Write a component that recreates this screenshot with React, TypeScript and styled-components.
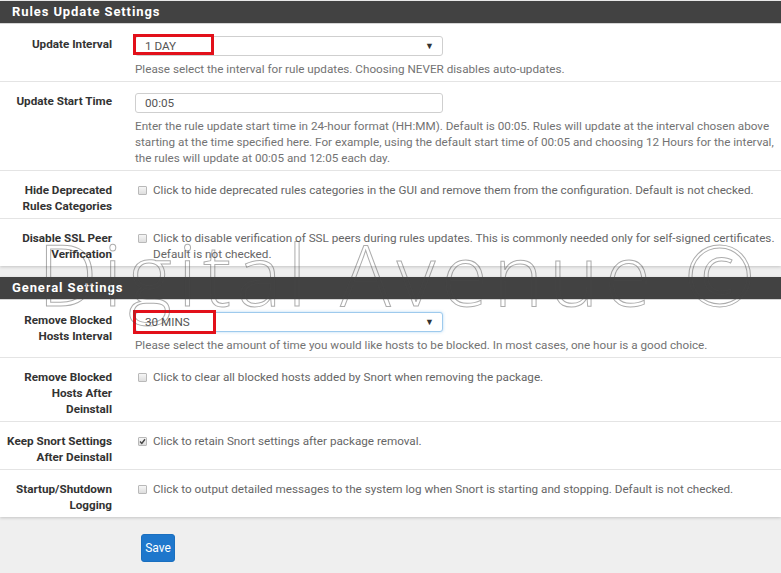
import React from "react";
import styled, { createGlobalStyle } from "styled-components";

const Global = createGlobalStyle`
  html, body { margin: 0; padding: 0; background: #efefef; }
  body { font-family: Roboto, "Liberation Sans", Arial, sans-serif; }
  #root { min-height: 573px; }
`;

const Page = styled.div`
  position: relative;
  width: 781px;
  min-height: 573px;
  overflow: hidden;
  padding-top: 1px;
  box-sizing: border-box;
`;

const Panel = styled.section<{ $gap?: number }>`
  background: #fff;
  box-shadow: 0 1px 3px rgba(0, 0, 0, 0.18);
  margin-bottom: ${(p) => p.$gap ?? 0}px;
`;

const PanelHeading = styled.h2`
  margin: 0;
  height: 22px;
  background: #424242;
  color: #fff;
  font-size: 13px;
  font-weight: 700;
  letter-spacing: 0.9px;
  line-height: 22px;
  padding-left: 12px;
  border-bottom: 1px solid #d5d5d5;
`;

const Row = styled.div<{ $first?: boolean }>`
  display: flex;
  align-items: flex-start;
  padding: ${(p) => (p.$first ? 12 : 11)}px 0 4px;
  border-top: ${(p) => (p.$first ? "none" : "1px solid #e4e4e4")};
`;

const Label = styled.div`
  flex: 0 0 112px;
  padding-right: 23px;
  text-align: right;
  font-size: 11.7px;
  font-weight: 700;
  line-height: 16px;
  color: #333;
`;

const Field = styled.div`
  flex: 1;
  padding-right: 2px;
  min-width: 0;
`;

const SelectWrap = styled.div`
  position: relative;
  width: 308px;
`;

const SelectBox = styled.div<{ $focus?: boolean }>`
  height: 20px;
  box-sizing: border-box;
  border: 1px solid ${(p) => (p.$focus ? "#9ecaed" : "#cfcfcf")};
  box-shadow: ${(p) => (p.$focus ? "0 0 3px rgba(102,175,233,0.5)" : "none")};
  border-radius: 3px;
  background: #fff;
  display: flex;
  align-items: center;
  justify-content: space-between;
  padding: 0 8px 0 9px;
  font-size: 11.7px;
  color: #555;
`;

const Arrow = styled.span`
  font-size: 9px;
  color: #333;
`;

const Highlight = styled.span<{ $w: number; $h: number; $top: number }>`
  position: absolute;
  left: -2px;
  top: ${(p) => p.$top}px;
  width: ${(p) => p.$w}px;
  height: ${(p) => p.$h}px;
  box-sizing: border-box;
  border: 3px solid #e2101a;
  pointer-events: none;
`;

const TextInput = styled.div`
  width: 308px;
  height: 20px;
  box-sizing: border-box;
  border: 1px solid #cfcfcf;
  border-radius: 3px;
  padding: 0 9px;
  font-size: 11.7px;
  line-height: 18px;
  color: #555;
`;

const Help = styled.p`
  margin: 5px 0 0;
  font-size: 11.7px;
  line-height: 16px;
  color: #737373;
`;

const CheckLine = styled.div`
  display: flex;
  align-items: flex-start;
`;

const Box = styled.span`
  flex: 0 0 auto;
  width: 9px;
  height: 9px;
  box-sizing: border-box;
  margin: 4px 6px 0 3px;
  border: 1px solid #b9b9b9;
  border-radius: 1px;
  background: linear-gradient(#f6f6f6, #dedede);
  display: flex;
  align-items: center;
  justify-content: center;
`;

const CheckText = styled.span`
  font-size: 11.7px;
  line-height: 16px;
  color: #666;
`;

const Actions = styled.div`
  padding: 17px 0 0 141px;
`;

const SaveButton = styled.button`
  height: 28px;
  width: 34px;
  padding: 0;
  border: 1px solid #1a6fbf;
  border-radius: 3px;
  background: #1e77cc;
  color: #fff;
  font-family: Roboto, "Liberation Sans", Arial, sans-serif;
  font-size: 12px;
`;

const Watermark = styled.div`
  position: absolute;
  left: 38px;
  top: 232px;
  font-family: "Open Sans", "DejaVu Sans", sans-serif;
  font-weight: 300;
  font-size: 84px;
  line-height: 84px;
  letter-spacing: 6px;
  white-space: nowrap;
  color: transparent;
  -webkit-text-stroke: 1px rgba(70, 70, 70, 0.45);
  pointer-events: none;
`;

function Checkbox({ checked, children }: { checked?: boolean; children: React.ReactNode }) {
  return (
    <CheckLine>
      <Box>
        {checked && (
          <svg width="7" height="7" viewBox="0 0 7 7">
            <path d="M1 3.6 L2.8 5.4 L6 1.3" fill="none" stroke="#444" strokeWidth="1.4" />
          </svg>
        )}
      </Box>
      <CheckText>{children}</CheckText>
    </CheckLine>
  );
}

export default function App() {
  return (
    <Page>
      <Global />
      <Panel $gap={11}>
        <PanelHeading>Rules Update Settings</PanelHeading>
        <Row $first>
          <Label>Update Interval</Label>
          <Field>
            <SelectWrap>
              <SelectBox>
                <span>1 DAY</span>
                <Arrow>▼</Arrow>
              </SelectBox>
              <Highlight $w={81} $h={21} $top={-2} />
            </SelectWrap>
            <Help>Please select the interval for rule updates. Choosing NEVER disables auto-updates.</Help>
          </Field>
        </Row>
        <Row>
          <Label>Update Start Time</Label>
          <Field>
            <TextInput>00:05</TextInput>
            <Help>
              Enter the rule update start time in 24-hour format (HH:MM). Default is 00:05. Rules will update at the interval chosen above
              <br />
              starting at the time specified here. For example, using the default start time of 00:05 and choosing 12 Hours for the interval,
              <br />
              the rules will update at 00:05 and 12:05 each day.
            </Help>
          </Field>
        </Row>
        <Row>
          <Label>Hide Deprecated Rules Categories</Label>
          <Field>
            <Checkbox>Click to hide deprecated rules categories in the GUI and remove them from the configuration. Default is not checked.</Checkbox>
          </Field>
        </Row>
        <Row>
          <Label>Disable SSL Peer Verification</Label>
          <Field>
            <Checkbox>
              Click to disable verification of SSL peers during rules updates. This is commonly needed only for self-signed certificates.
              <br />
              Default is not checked.
            </Checkbox>
          </Field>
        </Row>
      </Panel>
      <Panel>
        <PanelHeading>General Settings</PanelHeading>
        <Row $first>
          <Label>Remove Blocked Hosts Interval</Label>
          <Field>
            <SelectWrap>
              <SelectBox $focus>
                <span>30 MINS</span>
                <Arrow>▼</Arrow>
              </SelectBox>
              <Highlight $w={83} $h={24} $top={-2} />
            </SelectWrap>
            <Help>Please select the amount of time you would like hosts to be blocked. In most cases, one hour is a good choice.</Help>
          </Field>
        </Row>
        <Row>
          <Label>
            Remove Blocked
            <br />
            Hosts After
            <br />
            Deinstall
          </Label>
          <Field>
            <Checkbox>Click to clear all blocked hosts added by Snort when removing the package.</Checkbox>
          </Field>
        </Row>
        <Row>
          <Label>Keep Snort Settings After Deinstall</Label>
          <Field>
            <Checkbox checked>Click to retain Snort settings after package removal.</Checkbox>
          </Field>
        </Row>
        <Row>
          <Label>Startup/Shutdown Logging</Label>
          <Field>
            <Checkbox>Click to output detailed messages to the system log when Snort is starting and stopping. Default is not checked.</Checkbox>
          </Field>
        </Row>
      </Panel>
      <Actions>
        <SaveButton>Save</SaveButton>
      </Actions>
      <Watermark>Digital Avenue ©</Watermark>
    </Page>
  );
}
